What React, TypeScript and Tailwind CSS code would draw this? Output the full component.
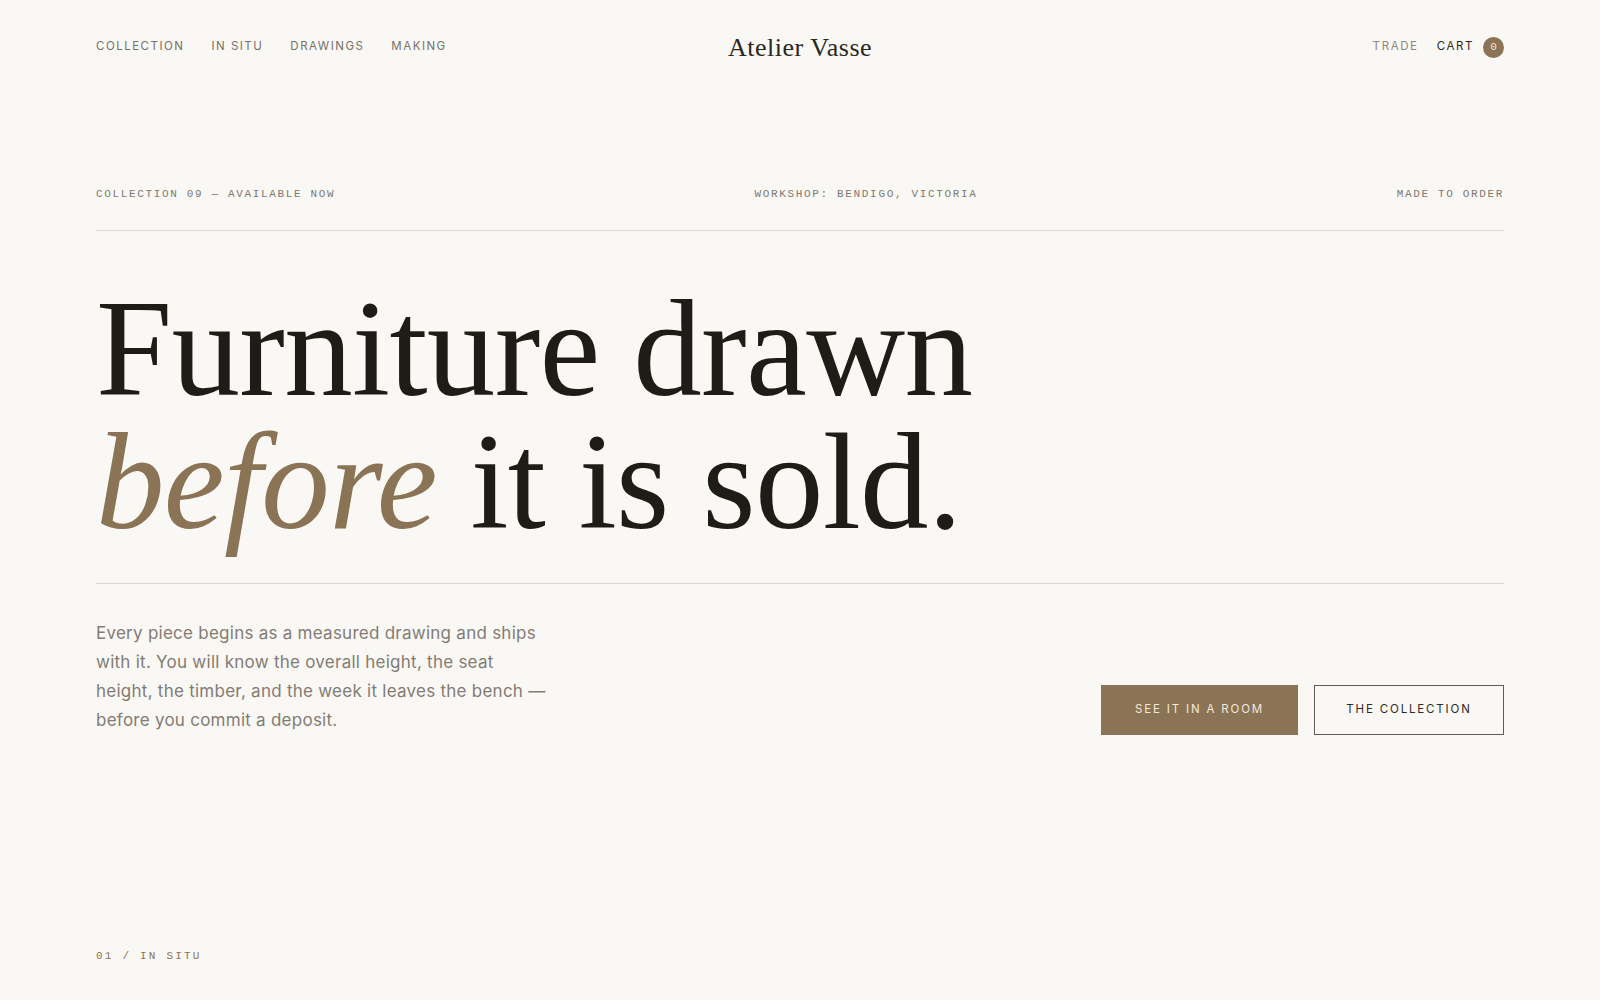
import React from "react"

const sans = "font-['Inter','Noto_Sans',sans-serif]"
const serif = "font-['Liberation_Serif','Times_New_Roman',serif]"
const mono = "font-['Liberation_Mono','DejaVu_Sans_Mono',monospace]"

const navLinks = ["Collection", "In Situ", "Drawings", "Making"]

export default function App() {
  return (
    <div className={`min-h-[1000px] bg-[#faf8f4] text-[#1f1c18] px-[96px] ${sans}`}>
      {/* Header */}
      <header className="grid h-[94px] grid-cols-[1fr_auto_1fr] items-center">
        <nav className="flex items-center gap-[27px]">
          {navLinks.map((l) => (
            <a key={l} href="#" className="text-[11.5px] uppercase tracking-[0.13em] text-[#75706a]">
              {l}
            </a>
          ))}
        </nav>
        <div className={`text-[26px] tracking-[0.02em] text-[#2a2622] ${serif}`}>Atelier Vasse</div>
        <div className="flex items-center justify-end">
          <a href="#" className="text-[11.5px] uppercase tracking-[0.14em] text-[#8d877f]">Trade</a>
          <a href="#" className="ml-[18px] text-[11.5px] uppercase tracking-[0.14em] text-[#2a2622]">Cart</a>
          <span className={`ml-[9px] flex h-[21px] w-[21px] items-center justify-center rounded-full bg-[#8b7355] text-[11px] text-[#efe7da] ${mono}`}>
            0
          </span>
        </div>
      </header>

      {/* Meta row */}
      <div className={`mt-[92px] flex justify-between border-b border-[#dedad3] pb-[27px] text-[11px] uppercase tracking-[0.15em] text-[#7c7872] ${mono}`}>
        <span>Collection 09 — Available now</span>
        <span>Workshop: Bendigo, Victoria</span>
        <span>Made to order</span>
      </div>

      {/* Headline */}
      <h1 className={`mt-[52px] text-[137px] font-normal leading-[133px] tracking-[-0.005em] text-[#1f1c18] ${serif}`}>
        Furniture drawn
        <br />
        <em className="text-[#8b7355]">before</em> it is sold.
      </h1>

      <div className="mt-[34px] border-t border-[#dedad3]" />

      {/* Intro + actions */}
      <div className="mt-[35px] flex items-end justify-between">
        <p className="w-[456px] text-[17px] leading-[29px] tracking-[0.015em] text-[#827c74]">
          Every piece begins as a measured drawing and ships with it. You will know the overall height, the seat
          height, the timber, and the week it leaves the bench — before you commit a deposit.
        </p>
        <div className="flex items-center gap-[16px]">
          <button className="h-[50px] w-[197px] bg-[#8b7355] text-[11.5px] uppercase tracking-[0.16em] text-[#f1e9dc]">
            See it in a room
          </button>
          <button className="h-[50px] w-[190px] border border-[#5f5b55] text-[11.5px] uppercase tracking-[0.16em] text-[#2f2b27]">
            The collection
          </button>
        </div>
      </div>

      {/* Section label */}
      <div className={`mt-[213px] text-[11px] uppercase tracking-[0.2em] text-[#8b7355] ${mono}`}>01 / In situ</div>
    </div>
  )
}
